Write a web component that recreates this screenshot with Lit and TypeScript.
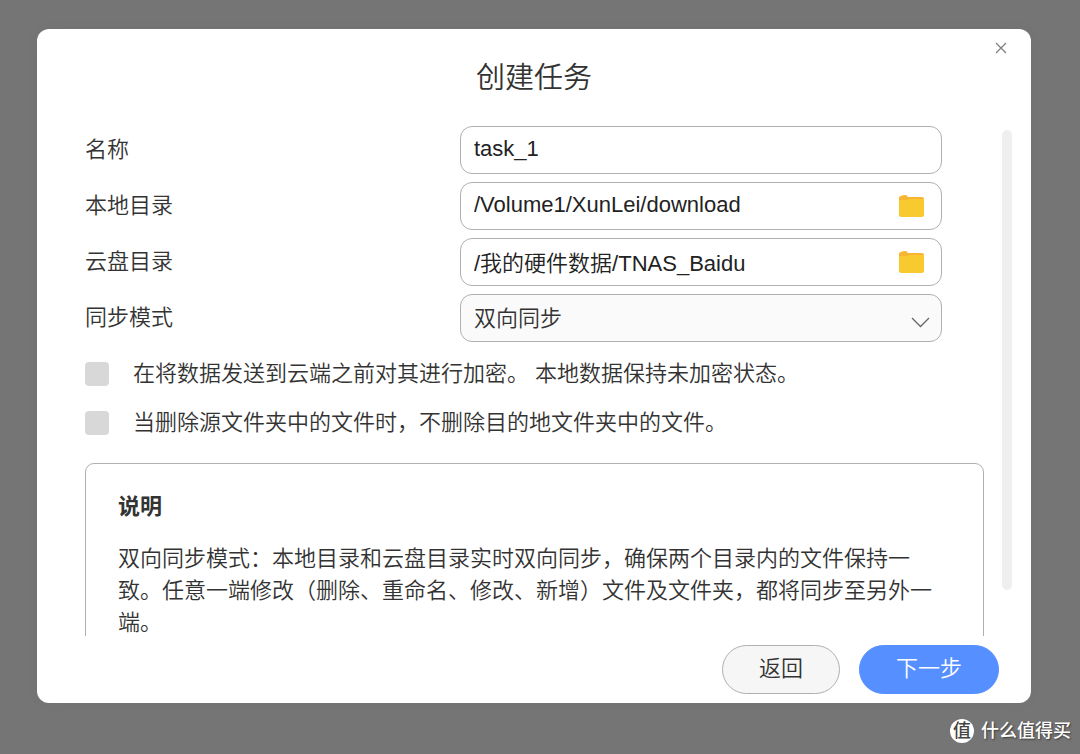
import { LitElement, html, css, svg } from "lit";
import { customElement, state } from "lit/decorators.js";

const folderIcon = svg`
  <path d="M0 3 Q0 1 2 1 Q4 0 6 0 Q8 0 9 2 L23 2 Q25 2 25 4 L25 9 L0 9 Z" fill="#f9b52f"></path>
  <path d="M0 5 L8 5 L10 4 L25 4 L25 20 Q25 22 23 22 L2 22 Q0 22 0 20 Z" fill="#f9ca30"></path>`;

@customElement("app-root")
export class AppRoot extends LitElement {
  static styles = css`
    :host {
      display: block;
      font-family: "Liberation Sans", "Noto Sans CJK SC", sans-serif;
      font-size: 22px;
      font-weight: 350;
      line-height: 32px;
      color: #333;
      text-spacing-trim: space-all;
    }
    * {
      box-sizing: border-box;
    }
    button,
    input,
    select {
      font: inherit;
      color: inherit;
      margin: 0;
    }
    button {
      cursor: pointer;
    }
    .page {
      display: flex;
      flex-direction: column;
      height: 100vh;
      padding: 29px 49px 0 37px;
      background: #757575;
    }
    .dialog {
      flex: 1;
      min-height: 0;
      display: flex;
      flex-direction: column;
      position: relative;
      background: #fff;
      border-radius: 12px;
      box-shadow: 0 0 16px rgba(0, 0, 0, 0.03);
    }
    .title {
      margin: 0;
      padding: 29px 0 28px;
      font-size: 29px;
      font-weight: 350;
      line-height: 40px;
      text-align: center;
    }
    .close {
      position: absolute;
      top: 8px;
      right: 19px;
      display: grid;
      place-items: center;
      width: 22px;
      height: 22px;
      padding: 0;
      border: 0;
      background: none;
    }
    .main {
      flex: 1;
      min-height: 0;
      display: flex;
      gap: 18px;
      padding: 0 19px 0 48px;
    }
    .body {
      flex: 1;
      min-width: 0;
      overflow-y: auto;
      scrollbar-width: none;
    }
    .track {
      width: 10px;
      margin: 4px 0 46px;
      border-radius: 5px;
      background: #efefef;
    }
    .fields {
      display: grid;
      grid-template-columns: minmax(0, 375fr) minmax(0, 482fr);
      gap: 8px 0;
      align-items: center;
      padding-right: 42px;
    }
    .field {
      display: flex;
      align-items: center;
      height: 48px;
      padding-right: 17px;
      border: 1px solid #b0b0b0;
      border-radius: 12px;
      background: #fff;
    }
    .input {
      flex: 1;
      min-width: 0;
      height: 100%;
      padding: 0 0 2px 13px;
      border: 0;
      outline: 0;
      background: none;
      color: #222;
    }
    .browse {
      display: flex;
      padding: 0;
      border: 0;
      background: none;
    }
    .select-box {
      display: grid;
      align-items: center;
      height: 48px;
    }
    .select {
      grid-area: 1 / 1;
      width: 100%;
      height: 48px;
      padding: 2px 40px 0 13px;
      appearance: none;
      border: 1px solid #b0b0b0;
      border-radius: 12px;
      background: #fafafa;
    }
    .chevron {
      grid-area: 1 / 1;
      justify-self: end;
      margin: 8px 12px 0 0;
      pointer-events: none;
    }
    .options {
      display: flex;
      flex-direction: column;
      gap: 16px;
      padding: 15px 0 24px;
    }
    .option {
      display: flex;
      align-items: center;
      gap: 24px;
      min-height: 33px;
    }
    .check {
      flex: none;
      width: 24px;
      height: 24px;
      appearance: none;
      border-radius: 4px;
      background: #d8d8d8;
    }
    .check:checked {
      background: #568fff;
    }
    .note {
      padding: 27px 32px;
      border: 1px solid #b0b0b0;
      border-radius: 9px;
    }
    .note-title {
      margin: 0 0 20px;
      font-size: 22px;
      font-weight: 700;
    }
    .note-text {
      margin: 0;
    }
    .actions {
      display: flex;
      justify-content: flex-end;
      gap: 19px;
      padding: 9px 32px;
    }
    .btn {
      height: 49px;
      padding: 0 36px 2px;
      border: 1px solid #b0b0b0;
      border-radius: 25px;
      background: #f6f6f6;
    }
    .primary {
      border-color: #568fff;
      background: #568fff;
      color: #fff;
    }
    .brand {
      display: flex;
      flex: none;
      align-items: center;
      align-self: flex-end;
      gap: 7px;
      height: 51px;
      margin-right: -40px;
      padding-top: 5px;
      color: #fff;
      font-size: 18px;
      font-weight: 500;
      text-shadow: 1px 1px 2px rgba(0, 0, 0, 0.5);
    }
    .badge {
      display: grid;
      place-items: center;
      width: 24px;
      height: 24px;
      border-radius: 50%;
      background: #fff;
      color: #444;
      font-size: 18px;
      line-height: 24px;
      text-shadow: none;
    }
  `;

  @state() private local = "/Volume1/XunLei/download";
  @state() private cloud = "/我的硬件数据/TNAS_Baidu";

  private pathField(id: string, label: string, value: string) {
    return html`
      <label for=${id}>${label}</label>
      <div class="field">
        <input class="input" id=${id} type="text" .value=${value} />
        <button class="browse" type="button" aria-label=${label}>
          <svg width="25" height="22" viewBox="0 0 25 22">${folderIcon}</svg>
        </button>
      </div>
    `;
  }

  render() {
    return html`
      <div class="page">
        <form class="dialog" role="dialog" aria-labelledby="title">
          <h1 class="title" id="title">创建任务</h1>
          <button class="close" type="button" aria-label="关闭">
            <svg width="12" height="12" viewBox="0 0 12 12">
              <path d="M1 1 L11 11 M11 1 L1 11" fill="none" stroke="#808080" stroke-width="1.3"></path>
            </svg>
          </button>
          <div class="main">
            <div class="body">
              <div class="fields">
                <label for="name">名称</label>
                <div class="field">
                  <input class="input" id="name" type="text" value="task_1" />
                </div>
                ${this.pathField("local", "本地目录", this.local)}
                ${this.pathField("cloud", "云盘目录", this.cloud)}
                <label for="mode">同步模式</label>
                <div class="select-box">
                  <select class="select" id="mode">
                    <option>双向同步</option>
                  </select>
                  <svg class="chevron" width="19" height="11" viewBox="0 0 19 11">
                    <path d="M1 1 L9.5 9.5 L18 1" fill="none" stroke="#666" stroke-width="1.3"></path>
                  </svg>
                </div>
              </div>
              <div class="options">
                <label class="option">
                  <input class="check" type="checkbox" />
                  <span>在将数据发送到云端之前对其进行加密。 本地数据保持未加密状态。</span>
                </label>
                <label class="option">
                  <input class="check" type="checkbox" />
                  <span>当删除源文件夹中的文件时，不删除目的地文件夹中的文件。</span>
                </label>
              </div>
              <section class="note">
                <h2 class="note-title">说明</h2>
                <p class="note-text">双向同步模式：本地目录和云盘目录实时双向同步，确保两个目录内的文件保持一致。任意一端修改（删除、重命名、修改、新增）文件及文件夹，都将同步至另外一端。</p>
              </section>
            </div>
            <div class="track"></div>
          </div>
          <div class="actions">
            <button class="btn" type="button">返回</button>
            <button class="btn primary" type="button">下一步</button>
          </div>
        </form>
        <div class="brand"><span class="badge">值</span><span>什么值得买</span></div>
      </div>
    `;
  }
}
